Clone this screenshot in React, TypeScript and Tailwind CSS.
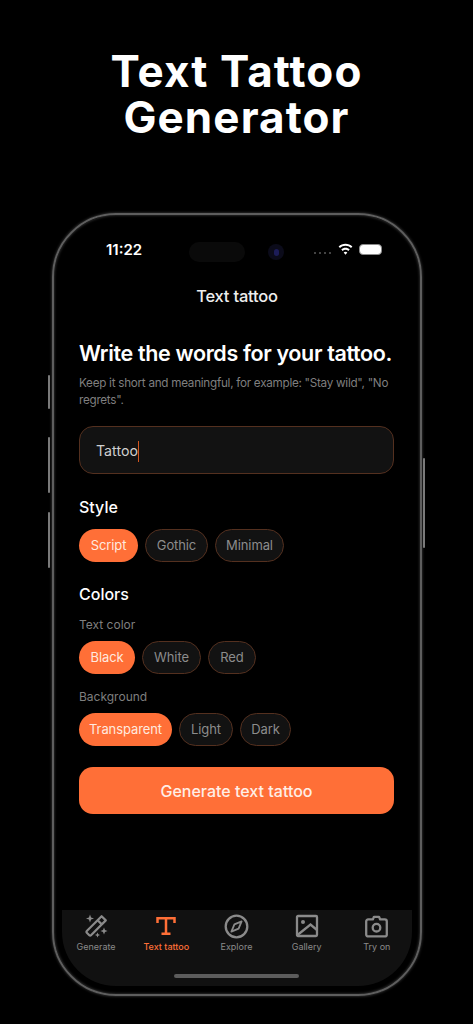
const font = "font-['Inter','Noto_Sans',sans-serif]";

function Chip({ label, active, width }: { label: string; active?: boolean; width: string }) {
    return (
        <div
            className={`${width} h-[33px] rounded-full flex items-center justify-center text-[13px] tracking-[-0.1px] ${
                active
                    ? "bg-[#ff6f37] text-[#ffe9df]"
                    : "bg-[#121212] border border-[#54301f] text-[#8c8c8c]"
            }`}
        >
            {label}
        </div>
    );
}

function WandIcon() {
    return (
        <svg width="26" height="26" viewBox="0 0 26 26" fill="none" stroke="#8a8a8a" strokeWidth="2.2">
            <path d="M18.6 3.2 22.8 7.4 8 22.2a1.2 1.2 0 0 1-1.7 0L3.8 19.7a1.2 1.2 0 0 1 0-1.7Z" strokeLinejoin="round" />
            <path d="M14.6 7.2 18.8 11.4" />
            <path fill="#8a8a8a" stroke="none" d="M7 1.5 8.1 4.4 11 5.5 8.1 6.6 7 9.5 5.9 6.6 3 5.5 5.9 4.4ZM21 14.5 22 17 24.5 18 22 19 21 21.5 20 19 17.5 18 20 17ZM14.5 19.5 15.3 21.2 17 22 15.3 22.8 14.5 24.5 13.7 22.8 12 22 13.7 21.2Z" />
        </svg>
    );
}

function TextIcon() {
    return (
        <svg width="22" height="22" viewBox="0 0 22 22" fill="none" stroke="#ff6f37" strokeWidth="2.5">
            <path d="M2.5 8V3.2h17V8" />
            <path d="M11 3.2v15.6" />
            <path d="M6.5 18.8h9" />
        </svg>
    );
}

function CompassIcon() {
    return (
        <svg width="25" height="25" viewBox="0 0 25 25" fill="none" stroke="#8a8a8a">
            <circle cx="12.5" cy="12.5" r="10.8" strokeWidth="2.3" />
            <path d="M17.6 7.4 14.6 14.6 7.4 17.6 10.4 10.4Z" strokeWidth="1.8" strokeLinejoin="round" />
        </svg>
    );
}

function GalleryIcon() {
    return (
        <svg width="24" height="24" viewBox="0 0 24 24" fill="none" stroke="#8a8a8a" strokeWidth="2.3">
            <rect x="2" y="2" width="20" height="20" rx="1" />
            <circle cx="8" cy="8" r="2" fill="#8a8a8a" stroke="none" />
            <path d="M2.5 21 15.5 10.5 22 16" />
        </svg>
    );
}

function CameraIcon() {
    return (
        <svg width="25" height="25" viewBox="0 0 25 25" fill="none" stroke="#8a8a8a" strokeWidth="2.3">
            <path d="M8.8 5.4 10 2.8h5l1.2 2.6h4.6a2 2 0 0 1 2 2v13a2 2 0 0 1-2 2H4.200a2 2 0 0 1-2-2v-13a2 2 0 0 1 2-2Z" strokeLinejoin="round" />
            <circle cx="12.500" cy="13.700" r="3.800" />
        </svg>
    );
}

function Tab({ label, icon, active }: { label: string; icon: React.ReactNode; active?: boolean }) {
    return (
        <div className="w-[70.2px] shrink-0 flex flex-col items-center">
            <div className="h-[26px] flex items-center justify-center">{icon}</div>
            <span className={`mt-[2px] text-[9px] leading-[12px] ${active ? "text-[#ff6f37] font-medium" : "text-[#8a8a8a]"}`}>
                {label}
            </span>
        </div>
    );
}

function SideButton({ className }: { className: string }) {
    return <div className={`absolute w-[2px] rounded-[2px] bg-[#7a7a7a] ${className}`} />;
}

export default function App() {
    return (
        <div className={`${font} w-[473px] h-[1024px] bg-black overflow-hidden text-white`}>
            <h1 className="pt-[48px] text-center text-[44px] leading-[46px] font-bold tracking-[1.1px]">
                Text Tattoo
                <br />
                Generator
            </h1>

            <div className="relative mt-[73px] ml-[52px] w-[370px] h-[783px] rounded-[64px] border-2 border-[#5e5e5e] shadow-[0_0_3px_#4a4a4a,inset_0_0_3px_#4a4a4a] p-[8px]">
                <SideButton className="left-[-6px] top-[160px] h-[34px]" />
                <SideButton className="left-[-6px] top-[222px] h-[56px]" />
                <SideButton className="left-[-6px] top-[297px] h-[56px]" />
                <SideButton className="right-[-5px] top-[243px] h-[90px]" />

                <div className="w-[350px] h-[763px] rounded-[54px] bg-black overflow-hidden flex flex-col">
                    <div className="h-[56px] pt-[17px] pl-[44px] pr-[30px] flex items-start justify-between">
                        <span className="text-[15px] leading-[20px] font-semibold">11:22</span>
                        <div className="flex items-center relative mt-[3px]">
                            <div className="absolute right-[137px] top-[-1px] w-[56px] h-[20px] rounded-full bg-[#0a0a0a]" />
                            <div className="absolute right-[98px] top-[1px] w-[16px] h-[16px] rounded-full bg-[#0b0b1a] flex items-center justify-center">
                                <div className="w-[5px] h-[7px] rounded-full bg-[#1c1c58]" />
                            </div>
                            <div className="flex gap-[2.5px] mr-[7px] mt-[8px]">
                                <div className="w-[2.5px] h-[2.5px] rounded-full bg-[#5a5a5a]" />
                                <div className="w-[2.5px] h-[2.5px] rounded-full bg-[#5a5a5a]" />
                                <div className="w-[2.5px] h-[2.5px] rounded-full bg-[#5a5a5a]" />
                                <div className="w-[2.5px] h-[2.5px] rounded-full bg-[#5a5a5a]" />
                            </div>
                            <svg width="15" height="12" viewBox="0 0 24 19" fill="white" className="mr-[6px]">
                                <path d="M12 1C7.800 1 4 2.700 1 5.400l2.200 2.300C5.600 5.500 8.600 4.200 12 4.200s6.400 1.300 8.800 3.500L23 5.400C20 2.700 16.200 1 12 1Z" />
                                <path d="M12 7.500c-2.600 0-5 1-6.700 2.700l2.200 2.300c1.200-1.100 2.800-1.800 4.500-1.800s3.300.7 4.500 1.800l2.200-2.300C17 8.500 14.600 7.500 12 7.500Z" />
                                <path d="M12 14c-1.100 0-2.100.4-2.900 1.100L12 18.500l2.900-3.400c-.8-.7-1.800-1.100-2.900-1.100Z" />
                            </svg>
                            <div className="w-[23px] h-[11px] rounded-[4px] border border-[#8a8a8a] bg-white" />
                        </div>
                    </div>

                    <div className="mt-[6px] text-center text-[16.5px] leading-[22px] font-medium tracking-[-0.2px] text-[#eeeeee]">
                        Text tattoo
                    </div>

                    <div className="mt-[31px] px-[17px] flex-1">
                        <h2 className="text-[21.500px] leading-[30px] font-semibold tracking-[-0.35px] whitespace-nowrap">
                            Write the words for your tattoo.
                        </h2>
                        <p className="mt-[7px] text-[11.700px] leading-[17px] tracking-[-0.27px] text-[#7f7f7f]">
                            Keep it short and meaningful, for example: "Stay wild", "No regrets".
                        </p>

                        <div className="mt-[17px] h-[48px] w-[315px] rounded-[14px] border border-[#54301f] bg-[#121212] pl-[16px] pt-[2px] flex items-center">
                            <span className="text-[14.200px] text-[#cfcfcf]">Tattoo</span>
                            <div className="w-[1.500px] h-[21px] bg-[#d2561f]" />
                        </div>

                        <h3 className="mt-[22px] text-[16px] leading-[22px] font-medium">Style</h3>
                        <div className="mt-[11px] flex gap-[7px]">
                            <Chip label="Script" active width="w-[59px]" />
                            <Chip label="Gothic" width="w-[63px]" />
                            <Chip label="Minimal" width="w-[69px]" />
                        </div>

                        <h3 className="mt-[21px] text-[16px] leading-[22px] font-medium">Colors</h3>
                        <div className="mt-[12px] text-[12px] leading-[16px] text-[#7f7f7f]">Text color</div>
                        <div className="mt-[8px] flex gap-[7px]">
                            <Chip label="Black" active width="w-[56px]" />
                            <Chip label="White" width="w-[59px]" />
                            <Chip label="Red" width="w-[48px]" />
                        </div>
                        <div className="mt-[15px] text-[12px] leading-[16px] text-[#7f7f7f]">Background</div>
                        <div className="mt-[8px] flex gap-[7px]">
                            <Chip label="Transparent" active width="w-[93px]" />
                            <Chip label="Light" width="w-[54px]" />
                            <Chip label="Dark" width="w-[51px]" />
                        </div>

                        <div className="mt-[21px] h-[47px] w-[315px] rounded-[14px] bg-[#ff6f37] flex items-center justify-center text-[16px] font-medium text-[#ffeee6]">
                            Generate text tattoo
                        </div>
                    </div>

                    <div className="h-[76px] bg-[#111111] relative flex pt-[3px]">
                        <div className="flex -ml-[1px]">
                            <Tab label="Generate" icon={<WandIcon />} />
                            <Tab label="Text tattoo" active icon={<TextIcon />} />
                            <Tab label="Explore" icon={<CompassIcon />} />
                            <Tab label="Gallery" icon={<GalleryIcon />} />
                            <Tab label="Try on" icon={<CameraIcon />} />
                        </div>
                        <div className="absolute bottom-[8px] left-[112px] w-[125px] h-[4px] rounded-full bg-[#5c5c5c]" />
                    </div>
                </div>
            </div>
        </div>
    );
}
